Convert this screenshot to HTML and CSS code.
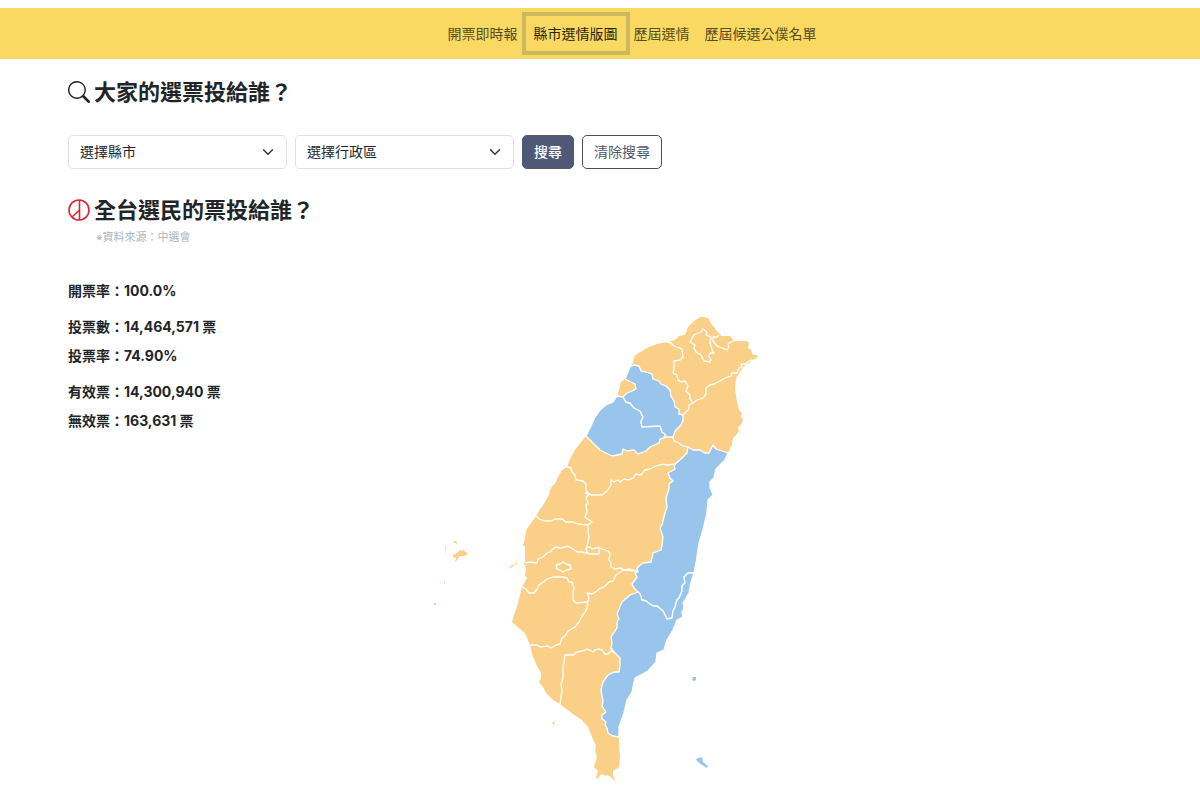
FILE: index.html
```html
<!DOCTYPE html>
<html lang="zh-Hant">
<head>
<meta charset="utf-8">
<meta name="viewport" content="width=device-width, initial-scale=1">
<title>縣市選情版圖</title>
<link rel="stylesheet" href="styles.css">
</head>
<body>
<nav class="navbar">
  <a class="nav-link" href="#live">開票即時報</a>
  <a class="nav-link active" href="#map" aria-current="page">縣市選情版圖</a>
  <a class="nav-link" href="#history">歷屆選情</a>
  <a class="nav-link nav-last" href="#candidates">歷屆候選公僕名單</a>
</nav>
<main class="container">
  <h1 class="title">
    <svg class="title-icon" viewBox="0 0 16 16" fill="currentColor" aria-hidden="true"><path d="M11.742 10.344a6.500 6.500 0 1 0-1.397 1.398h-.001q.044.06.098.115l3.850 3.850a1 1 0 0 0 1.415-1.414l-3.850-3.850a1 1 0 0 0-.115-.1zM12 6.500a5.500 5.500 0 1 1-11 0 5.500 5.500 0 0 1 11 0"/></svg>
    大家的選票投給誰？
  </h1>
  <form class="search">
    <select class="select" aria-label="選擇縣市"><option>選擇縣市</option></select>
    <select class="select" aria-label="選擇行政區"><option>選擇行政區</option></select>
    <button class="btn btn-primary" type="button">搜尋</button>
    <button class="btn btn-outline" type="reset">清除搜尋</button>
  </form>
  <h2 class="title">
    <svg class="title-icon vote-icon" viewBox="0 0 22 22" fill="none" stroke="currentColor" aria-hidden="true"><circle cx="11" cy="11" r="10"/><path d="M11.500 1v20M11.500 11L4 18"/></svg>
    全台選民的票投給誰？
  </h2>
  <p class="source"><span class="mark">※</span>資料來源：中選會</p>
  <section class="result">
    <div class="stats">
      <p>開票率：100.0%</p>
      <div class="group">
        <p>投票數：14,464,571 票</p>
        <p>投票率：74.90%</p>
      </div>
      <div class="group">
        <p>有效票：14,300,940 票</p>
        <p>無效票：163,631 票</p>
      </div>
    </div>
    <svg class="map" viewBox="420 300 360 490" role="img" aria-label="台灣縣市選情版圖">
      <g class="orange">
        <path d="M703 317L708 318L711 323L714 327L716 330L720 334L721 336L730 336L734 341L747 341L749 343L748 348L751 350L753 355L757 355L758 357L752 360L748 364L744 366L740 372L736 378L735 388L736 395L737 402L739 410L742 413L741 417L743 420L741 425L738 427L739 431L737 434L733 438L732 444L728 453L725 460L716 469L714 478L710 482L710 487L713 495L708 500L707 513L703 530L699 543L696 563L694 573L691 583L689 593L683 603L684 608L682 612L683 617L677 620L673 630L667 640L664 650L657 653L656 662L648 671L635 678L632 692L627 700L624 713L619 727L619 737L619 745L620 757L619 767L613 771L613 776L616 782L611 777L607 775L605 776L603 774L600 775L598 779L596 778L598 771L594 767L595 763L597 757L595 750L596 746L592 737L590 732L588 727L582 720L573 714L560 704L553 700L546 693L543 687L539 682L541 678L541 673L537 666L533 657L530 645L525 633L520 629L512 622L514 615L517 607L522 587L527 578L525 575L526 569L525 565L523 563L525 562L525 547L523 545L525 538L526 531L528 527L532 522L536 516L540 509L542 507L545 502L549 495L550 490L552 486L555 484L558 477L562 470L567 467L570 459L575 450L581 442L586 436L590 428L595 417L600 410L606 405L613 402L617 396L619 390L621 382L625 379L630 367L633 363L634 357L637 354L647 348L657 344L667 342L675 340L679 336L685 335L688 327L693 322L700 317Z"/>
        <path d="M453 555l4-2 3-3 2 1 1-1 4 3 0 2-3 1-5 0-1 3-3 3 1-4-3-1zM453 541l3 0 2 3-3-1zM445 545l1 3-1 7zM508 569l4-4 3 0 2-4 0 3-5 3zM444 580l1 3-1 1zM434 603l2 0 0 2-2 0zM552 723l3-2-1 4z"/>
      </g>
      <g class="blue">
        <path d="M586 436L590 428L595 417L600 410L606 405L613 402L617 396L623 397L626 402L630 403L634 408L640 411L643 417L641 422L642 425L648 426L660 426L662 432L665 434L664 438L660 439L659 443L650 447L646 451L638 454L634 450L627 451L623 449L622 454L612 456L600 450L593 443Z"/>
        <path d="M630 367L634 365L639 366L641 371L646 372L652 374L653 379L659 381L661 384L666 386L670 390L671 396L674 401L675 407L679 409L679 414L683 415L683 420L681 425L675 431L673 437L666 437L665 434L662 432L660 426L642 427L641 422L643 417L640 411L634 408L630 403L626 402L623 397L627 393L632 391L636 389L635 384L625 379Z"/>
        <path d="M688 447L693 450L700 450L705 453L709 453L713 445L716 449L728 453L725 460L716 469L714 478L710 482L710 487L713 495L708 500L707 513L703 530L699 543L696 563L694 573L688 573L684 577L685 583L682 586L682 591L679 598L677 600L675 607L673 611L672 618L667 619L663 611L657 606L653 606L646 601L642 600L640 594L638 592L634 588L632 584L637 577L635 573L638 572L637 568L639 566L643 563L651 562L653 553L661 550L662 545L663 537L660 528L662 525L665 513L667 507L666 498L669 489L669 484L673 481L670 478L668 473L675 469L674 465L682 458L687 453Z"/>
        <path d="M638 592L640 594L642 600L646 601L653 606L657 606L663 611L667 619L672 618L673 611L675 607L677 600L679 598L682 591L682 586L685 583L684 577L688 573L694 573L691 583L689 593L683 603L684 608L682 612L683 617L677 620L673 630L667 640L664 650L657 653L656 662L648 671L635 678L632 692L627 700L624 713L619 727L619 737L613 736L608 733L607 728L605 725L606 722L602 719L602 715L606 712L602 706L603 701L601 690L603 682L608 675L614 672L619 672L620 665L620 658L615 653L611 648L612 643L611 637L617 628L617 622L619 619L617 614L622 602L630 595Z"/>
        <path class="islet" d="M693 677h3v3l-2 1-2-1zM696 759l6-2 1 5 5 4-1 2-5-3-5-4z"/>
      </g>
      <g class="border">
        <path d="M667 342L671 343L674 346L682 349L683 357L680 360L674 361L674 369L673 373L677 375L678 380L681 382L685 381L688 386L686 391L690 395L690 399L693 403L689 405L689 409L685 413L683 415"/>
        <path d="M693 403L697 400L703 398L706 394L706 388L710 385L714 384L720 381L725 378L731 376L732 373L737 373L739 368L742 367L741 364L746 364L749 361L752 360"/>
        <path d="M673 437L674 441L679 443L681 445L688 447"/>
        <path d="M703 329L701 332L694 335L690 342L695 345L694 348L696 352L701 355L704 361L710 362L711 360L709 356L710 353L714 353L712 350L711 346L710 342L711 337L706 335L707 332Z"/>
        <path d="M719 335L717 337L713 337L713 341L717 346L727 350L729 347L728 344L731 342L734 341"/>
        <path d="M567 467L571 468L572 472L575 475L576 480L583 481L586 484L586 490L588 493L591 495L602 495L607 491L611 485L611 480L614 482L618 480L620 482L624 479L629 480L633 478L636 474L641 475L645 470L650 469L656 466L663 464L667 465L676 464"/>
        <path d="M585 493L590 494L586 497L588 503L586 505L587 512L585 517L592 522L588 525L588 532L589 537L588 541L587 547"/>
        <path d="M536 516L539 519L545 521L551 521L555 519L562 519L566 522L573 522L578 524L588 525"/>
        <path d="M525 563L530 562L537 563L538 559L543 557L547 553L550 552L555 547L561 548L568 546L573 549L577 552L582 552L587 553L586 548L590 547L592 549L599 547L599 554L589 554L586 551"/>
        <path d="M599 548L602 549L608 551L610 553L609 560L611 563L611 567L615 569L621 568L624 570L630 569L637 571"/>
        <path d="M563 562L566 564L570 565L571 569L567 570L563 572L560 570L557 569L556 565L560 564Z"/>
        <path d="M522 587L526 589L529 593L534 593L537 589L539 585L542 583L547 579L553 577L563 577L567 578L569 582L572 582L574 588L573 593L573 600L576 603L588 602L589 598L587 593L592 594L597 591L599 589L604 587L609 582L613 581L616 575L623 570L637 571"/>
        <path d="M588 603L587 608L585 612L581 618L579 622L575 627L568 631L565 636L562 638L560 644L556 645L551 648L547 646L540 647L537 645L530 645"/>
        <path d="M560 704L562 690L561 684L563 678L563 668L565 655L573 655L577 652L583 651L587 649L593 652L595 650L598 649L602 650L605 654L608 654L611 651L615 653"/>
      </g>
    </svg>
  </section>
</main>
</body>
</html>
```
FILE: styles.css
```css
* {
  box-sizing: border-box;
}

body {
  margin: 8px 0 0;
  background: #fff;
  color: #212529;
  font-family: Inter, "Noto Sans CJK TC", sans-serif;
  font-size: 14px;
  line-height: 22px;
}

h1,
h2,
p {
  margin: 0;
}

.navbar {
  display: flex;
  justify-content: center;
  align-items: center;
  padding: 4px 0 4px 64px;
  background: #f9d962;
  line-height: 21px;
}

.nav-link {
  padding: 7px 4px;
  color: #574c25;
  text-decoration: none;
}

.nav-link.active {
  padding: 7px 8px;
  border: 4px solid #cdb75f;
  color: #29240f;
}

.nav-last {
  margin-left: 7px;
}

.container {
  width: calc(100% - 136px);
  max-width: 1064px;
  margin: 0 auto;
}

.title {
  display: flex;
  align-items: center;
  gap: 4px;
  padding-top: 20px;
  font-size: 22px;
  font-weight: 600;
  line-height: 26px;
}

.title-icon {
  flex: none;
  width: 22px;
  height: 22px;
}

.vote-icon {
  color: #d92638;
  stroke-width: 1.6;
}

.search {
  display: flex;
  flex-wrap: wrap;
  gap: 8px;
  padding: 30px 0 8px;
}

.select {
  width: 219px;
  height: 34px;
  padding: 0 11px;
  border: 1px solid #dee2e6;
  border-radius: 5px;
  appearance: none;
  background: #fff url("data:image/svg+xml,%3Csvg xmlns='http://www.w3.org/2000/svg' viewBox='0 0 16 16'%3E%3Cpath fill='none' stroke='%23343a40' stroke-linecap='round' stroke-linejoin='round' stroke-width='2' d='m2 5 6 6 6-6'/%3E%3C/svg%3E") no-repeat right 12px center / 12px 12px;
  color: #212529;
  font: inherit;
}

.btn {
  height: 34px;
  padding: 0 11px;
  border: 1px solid #4f5874;
  border-radius: 5px;
  font: inherit;
}

.btn-primary {
  background: #4f5874;
  color: #fff;
  font-weight: 500;
}

.btn-outline {
  border-color: #4b4e55;
  background: #fff;
  color: #4f5874;
}

.source {
  padding: 4px 0 0 28px;
  color: #adb5bd;
  font-size: 11px;
  line-height: 20px;
}

.mark {
  font-size: 10px;
}

.result {
  display: grid;
  grid-template-columns: 1fr auto 1fr;
  margin-top: 33px;
  font-weight: 700;
}

.stats {
  display: flex;
  flex-direction: column;
  gap: 14px;
}

.group {
  display: flex;
  flex-direction: column;
  gap: 7px;
}

.map {
  width: 360px;
  margin-top: 20px;
}

.orange {
  fill: #fad088;
}

.blue {
  fill: #99c5ed;
  stroke: #fff;
  stroke-width: 1.3;
  stroke-linejoin: round;
}

.islet {
  stroke: none;
}

.border {
  fill: none;
  stroke: #fff;
  stroke-width: 1.3;
  stroke-linejoin: round;
}
```
